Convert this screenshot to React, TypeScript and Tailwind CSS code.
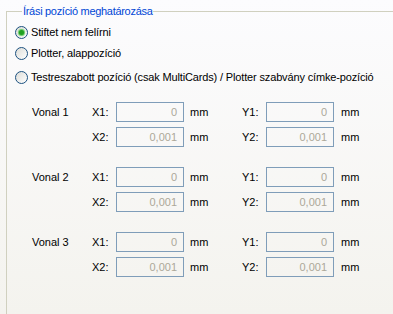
import React from "react";

const font = { fontFamily: '"Liberation Sans", Arial, sans-serif' };

const Radio = ({ checked, label }: { checked?: boolean; label: string }) => (
  <div className="flex h-[14px] items-center">
    <span className="flex h-[13px] w-[13px] items-center justify-center rounded-full border border-[#1c5180] bg-linear-to-br from-[#dcdcd7] to-white">
      {checked && (
        <span className="h-[5px] w-[5px] rounded-full bg-[#21a121] shadow-[0_0_1px_1px_#5ec85e]" />
      )}
    </span>
    <span className="ml-[3px] text-[11px] leading-[14px] tracking-[-0.15px] text-black">{label}</span>
  </div>
);

const Box = ({ value }: { value: string }) => (
  <div className="flex h-[20px] w-[68px] items-center justify-end border border-[#7f9db9] pr-[6px] text-[11px] text-[#aca899]">
    {value}
  </div>
);

const Row = ({ label, n }: { label?: string; n: number }) => (
  <div className="flex h-[20px] items-center text-[11px] text-black">
    <span className="w-[60px]">{label}</span>
    <span className="w-[24px]">X{n}:</span>
    <Box value={n === 1 ? "0" : "0,001"} />
    <span className="ml-[6px] w-[52px]">mm</span>
    <span className="w-[24px]">Y{n}:</span>
    <Box value={n === 1 ? "0" : "0,001"} />
    <span className="ml-[7px]">mm</span>
  </div>
);

export default function App() {
  const lines = ["Vonal 1", "Vonal 2", "Vonal 3"];
  return (
    <div
      style={font}
      className="h-[314px] w-[393px] overflow-hidden bg-linear-to-b from-[#fcfcfe] to-[#f4f3ee] pt-[4px] pl-[6px]"
    >
      <fieldset className="h-[400px] w-[420px] border border-[#d0d0bf] pl-[8px]">
        <legend className="ml-[7px] px-[1px] text-[11px] leading-[14px] tracking-[-0.3px] text-[#0046d5]">
          Írási pozíció meghatározása
        </legend>
        <div className="mt-[7px] flex flex-col">
          <Radio checked label="Stiftet nem felírni" />
          <div className="mt-[7px]">
            <Radio label="Plotter, alappozíció" />
          </div>
          <div className="mt-[10px]">
            <Radio label="Testreszabott pozíció (csak MultiCards) / Plotter szabvány címke-pozíció" />
          </div>
        </div>
        <div className="mt-[18px] ml-[17px] flex flex-col gap-[20px]">
          {lines.map((l) => (
            <div key={l} className="flex flex-col gap-[5px]">
              <Row label={l} n={1} />
              <Row n={2} />
            </div>
          ))}
        </div>
      </fieldset>
    </div>
  );
}
